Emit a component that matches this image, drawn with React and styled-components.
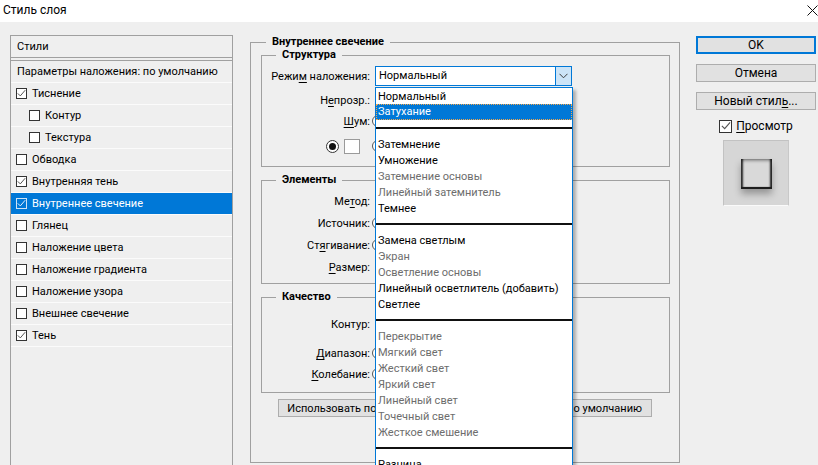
import React from 'react';
import styled, { createGlobalStyle } from 'styled-components';

const UI = `Roboto, "Noto Sans", "Liberation Sans", Arial, sans-serif`;
const BORDER = '#a0a0a0';
const BLUE = '#0078d7';

const GlobalStyle = createGlobalStyle`
  html, body { margin: 0; padding: 0; background: #efefef; overflow: hidden; }
  body { font-family: ${UI}; font-size: 11px; color: #000; }
  * { box-sizing: border-box; }
  u { text-decoration: underline; text-underline-offset: 2px; }
`;

const Window = styled.div`
  width: 818px;
  height: 465px;
  display: flex;
  flex-direction: column;
  overflow: hidden;
  background: #efefef;
`;

const TitleBar = styled.div`
  height: 22px;
  flex: none;
  background: #fff;
  display: flex;
  justify-content: space-between;
  align-items: flex-start;
  padding-left: 3px;
`;

const Title = styled.span`
  font-size: 12px;
  line-height: 20px;
`;

const CloseBtn = styled.div`
  width: 12px;
  height: 12px;
  margin-top: 4px;
  display: flex;
  align-items: center;
  justify-content: center;
`;

const Body = styled.div`
  flex: 1;
  min-height: 0;
  display: flex;
  padding: 13px 0 0 10px;
`;

/* ---------- left styles list ---------- */
const StylesPanel = styled.div`
  width: 223px;
  height: 470px;
  flex: none;
  border: 1px solid ${BORDER};
  display: flex;
  flex-direction: column;
`;

const PanelHeader = styled.div`
  height: 22px;
  border-bottom: 1px solid ${BORDER};
  margin-bottom: 2px;
  padding-left: 6px;
  display: flex;
  align-items: center;
`;

const BlendRow = styled.div`
  height: 23px;
  border-top: 1px solid ${BORDER};
  border-bottom: 1px solid #fbfbfb;
  padding-left: 6px;
  display: flex;
  align-items: center;
`;

const StyleRow = styled.div`
  height: 22px;
  border-bottom: 1px solid #fbfbfb;
  display: flex;
  align-items: center;
  gap: 5px;
  padding-left: ${p => (p.$indent ? 18 : 5)}px;
  background: ${p => (p.$selected ? BLUE : 'transparent')};
  color: ${p => (p.$selected ? '#fff' : '#000')};
`;

const Box = styled.span`
  width: 11px;
  height: 11px;
  flex: none;
  border: 1px solid ${p => (p.$light ? '#cfe3f5' : '#333')};
  background: ${p => (p.$light ? 'transparent' : '#fff')};
  display: flex;
  align-items: center;
  justify-content: center;
`;

const BigBox = styled(Box)`
  width: 13px;
  height: 13px;
`;

const Check = ({ color = '#555', size = 9 }) => (
  <svg width={size} height={size} viewBox="0 0 9 9">
    <path d="M0.8 4.4 L3.3 6.9 L8.2 1.2" fill="none" stroke={color} strokeWidth="1" />
  </svg>
);

/* ---------- center ---------- */
const Center = styled.div`
  width: 430px;
  flex: none;
  margin-left: 17px;
`;

const OuterSet = styled.fieldset`
  margin: 0;
  padding: 0 9px 45px 10px;
  border: 1px solid ${BORDER};
  min-width: 0;
`;

const OuterTitle = styled.legend`
  margin-left: 5px;
  padding: 0 6px;
  font-weight: bold;
  font-size: 11px;
  line-height: 14px;
`;

const Group = styled.fieldset`
  margin: ${p => p.$mt}px 0 0;
  padding: ${p => p.$pt}px 0 ${p => p.$pb}px;
  border: 1px solid ${BORDER};
  min-width: 0;
`;

const GroupTitle = styled.legend`
  margin-left: 14px;
  padding: 0 6px;
  font-weight: bold;
  font-size: 11px;
  line-height: 14px;
`;

const FormRow = styled.div`
  height: ${p => p.$h}px;
  display: flex;
  align-items: center;
`;

const FieldLabel = styled.div`
  width: 108px;
  flex: none;
  text-align: right;
  white-space: nowrap;
`;

const SwatchCell = styled.div`
  width: 108px;
  flex: none;
  display: flex;
  justify-content: flex-end;
  align-items: center;
  gap: 5px;
  padding-right: 10px;
`;

const Control = styled.div`
  margin-left: 5px;
  flex: 1;
  display: flex;
  align-items: center;
  position: relative;
`;

const Stub = styled.span`
  width: 12px;
  height: 12px;
  margin-left: -3px;
  border-radius: 50%;
  border: 1px solid #555;
  background: #fff;
`;

const Radio = styled.span`
  width: 13px;
  height: 13px;
  border-radius: 50%;
  border: 1px solid #333;
  background: #fff;
  display: flex;
  align-items: center;
  justify-content: center;
  &::after {
    content: '';
    width: 7px;
    height: 7px;
    border-radius: 50%;
    background: #111;
  }
`;

const Swatch = styled.span`
  width: 16px;
  height: 15px;
  background: #fff;
  border: 1px solid #9a9a9a;
`;

const Select = styled.div`
  width: 197px;
  height: 20px;
  border: 1px solid ${BLUE};
  background: #fff;
  display: flex;
  position: relative;
`;

const SelectValue = styled.div`
  flex: 1;
  padding-left: 3px;
  line-height: 18px;
`;

const SelectArrow = styled.div`
  width: 16px;
  background: #cce4f7;
  border-left: 1px solid ${BLUE};
  display: flex;
  align-items: center;
  justify-content: center;
`;

const DropList = styled.div`
  position: absolute;
  top: 20px;
  left: -1px;
  width: 198px;
  border: 1px solid ${BLUE};
  background: #fff;
  box-shadow: 3px 3px 3px rgba(0, 0, 0, 0.28);
  z-index: 5;
`;

const Option = styled.div`
  height: 16px;
  line-height: 15px;
  padding-left: 1px;
  white-space: nowrap;
  color: ${p => (p.$selected ? '#fff' : p.$gray ? '#6d6d6d' : '#000')};
  background: ${p => (p.$selected ? BLUE : '#fff')};
  border: 1px dotted ${p => (p.$selected ? '#f5a64a' : 'transparent')};
  border-bottom-width: 0;
  ${p => p.$selected && 'border-bottom-width: 1px; line-height: 14px;'}
`;

const Separator = styled.div`
  height: 16px;
  display: flex;
  align-items: center;
  &::after {
    content: '';
    flex: 1;
    height: 2px;
    background: #111;
  }
`;

const BottomButtons = styled.div`
  margin-top: 6px;
  padding-left: 17px;
  display: flex;
  gap: 34px;
`;

const FlatButton = styled.div`
  width: 170px;
  height: 18px;
  background: #e1e1e1;
  border: 1px solid #adadad;
  display: flex;
  align-items: center;
  justify-content: center;
  white-space: nowrap;
`;

/* ---------- right ---------- */
const Side = styled.div`
  width: 120px;
  flex: none;
  margin-left: 16px;
  padding-top: 1px;
  display: flex;
  flex-direction: column;
  align-items: center;
`;

const DialogButton = styled.div`
  width: 120px;
  height: 18px;
  margin-bottom: 10px;
  background: #e1e1e1;
  border: ${p => (p.$default ? `2px solid ${BLUE}` : '1px solid #adadad')};
  font-size: 12px;
  display: flex;
  align-items: center;
  justify-content: center;
`;

const PreviewToggle = styled.label`
  height: 16px;
  margin-top: -2px;
  display: flex;
  align-items: center;
  gap: 4px;
  font-size: 12px;
`;

const Preview = styled.div`
  width: 66px;
  height: 66px;
  margin-top: 6px;
  background: #d6d6d6;
  border: 1px solid;
  border-color: #c2c2c2 #c8c8c8 #fafafa #c2c2c2;
  display: flex;
  align-items: center;
  justify-content: center;
`;

const PreviewSquare = styled.div`
  width: 31px;
  height: 30px;
  margin-top: 1px;
  background: #d9d9d9;
  border-bottom: 2px solid #1e1e1e;
  box-shadow:
    inset 3px 0 2px -1px rgba(0, 0, 0, 0.8),
    inset -3px 0 2px -1px rgba(0, 0, 0, 0.85),
    inset 0 3px 3px -1px rgba(0, 0, 0, 0.35),
    0 5px 7px rgba(0, 0, 0, 0.3);
`;

const styles = [
  { t: 'Тиснение', c: true },
  { t: 'Контур', i: true },
  { t: 'Текстура', i: true },
  { t: 'Обводка' },
  { t: 'Внутренняя тень', c: true },
  { t: 'Внутреннее свечение', c: true, s: true },
  { t: 'Глянец' },
  { t: 'Наложение цвета' },
  { t: 'Наложение градиента' },
  { t: 'Наложение узора' },
  { t: 'Внешнее свечение' },
  { t: 'Тень', c: true },
];

const modes = [
  { t: 'Нормальный' },
  { t: 'Затухание', s: true },
  { sep: true },
  { t: 'Затемнение' },
  { t: 'Умножение' },
  { t: 'Затемнение основы', g: true },
  { t: 'Линейный затемнитель', g: true },
  { t: 'Темнее' },
  { sep: true },
  { t: 'Замена светлым' },
  { t: 'Экран', g: true },
  { t: 'Осветление основы', g: true },
  { t: 'Линейный осветлитель (добавить)' },
  { t: 'Светлее' },
  { sep: true },
  { t: 'Перекрытие', g: true },
  { t: 'Мягкий свет', g: true },
  { t: 'Жесткий свет', g: true },
  { t: 'Яркий свет', g: true },
  { t: 'Линейный свет', g: true },
  { t: 'Точечный свет', g: true },
  { t: 'Жесткое смешение', g: true },
  { sep: true },
  { t: 'Разница' },
];

export default function App() {
  return (
    <Window>
      <GlobalStyle />
      <TitleBar>
        <Title>Стиль слоя</Title>
        <CloseBtn>
          <svg width="11" height="11" viewBox="0 0 11 11">
            <path d="M0.5 0.5 L10.5 10.5 M10.5 0.5 L0.5 10.5" stroke="#111" strokeWidth="1" />
          </svg>
        </CloseBtn>
      </TitleBar>
      <Body>
        <StylesPanel>
          <PanelHeader>Стили</PanelHeader>
          <BlendRow>Параметры наложения: по умолчанию</BlendRow>
          {styles.map(s => (
            <StyleRow key={s.t} $indent={s.i} $selected={s.s}>
              <Box $light={s.s}>{s.c && <Check color={s.s ? '#dfefff' : '#555'} />}</Box>
              {s.t}
            </StyleRow>
          ))}
        </StylesPanel>

        <Center>
          <OuterSet>
            <OuterTitle>Внутреннее свечение</OuterTitle>

            <Group $mt={-1} $pt={0} $pb={6}>
              <GroupTitle>Структура</GroupTitle>
              <FormRow $h={28}>
                <FieldLabel>Режи<u>м</u> наложения:</FieldLabel>
                <Control>
                  <Select>
                    <SelectValue>Нормальный</SelectValue>
                    <SelectArrow>
                      <svg width="9" height="6" viewBox="0 0 9 6">
                        <path d="M0.5 0.8 L4.5 4.8 L8.5 0.8" fill="none" stroke="#3c3c3c" strokeWidth="1" />
                      </svg>
                    </SelectArrow>
                    <DropList>
                      {modes.map((m, idx) =>
                        m.sep ? (
                          <Separator key={idx} />
                        ) : (
                          <Option key={idx} $gray={m.g} $selected={m.s}>
                            {m.t}
                          </Option>
                        )
                      )}
                    </DropList>
                  </Select>
                </Control>
              </FormRow>
              <FormRow $h={20}>
                <FieldLabel>Н<u>е</u>прозр.:</FieldLabel>
                <Control />
              </FormRow>
              <FormRow $h={22}>
                <FieldLabel><u>Ш</u>ум:</FieldLabel>
                <Control><Stub /></Control>
              </FormRow>
              <FormRow $h={28}>
                <SwatchCell>
                  <Radio />
                  <Swatch />
                </SwatchCell>
                <Control><Stub /></Control>
              </FormRow>
            </Group>

            <Group $mt={6} $pt={3} $pb={5}>
              <GroupTitle>Элементы</GroupTitle>
              <FormRow $h={22}>
                <FieldLabel>Ме<u>т</u>од:</FieldLabel>
                <Control />
              </FormRow>
              <FormRow $h={22}>
                <FieldLabel>Источник:</FieldLabel>
                <Control><Stub /></Control>
              </FormRow>
              <FormRow $h={22}>
                <FieldLabel>Ст<u>я</u>гивание:</FieldLabel>
                <Control><Stub /></Control>
              </FormRow>
              <FormRow $h={22}>
                <FieldLabel><u>Р</u>азмер:</FieldLabel>
                <Control />
              </FormRow>
            </Group>

            <Group $mt={6} $pt={2} $pb={8}>
              <GroupTitle>Качество</GroupTitle>
              <FormRow $h={36}>
                <FieldLabel>Контур:</FieldLabel>
                <Control />
              </FormRow>
              <FormRow $h={22}>
                <FieldLabel><u>Д</u>иапазон:</FieldLabel>
                <Control><Stub /></Control>
              </FormRow>
              <FormRow $h={20}>
                <FieldLabel><u>К</u>олебание:</FieldLabel>
                <Control><Stub /></Control>
              </FormRow>
            </Group>

            <BottomButtons>
              <FlatButton>Использовать по умолчанию</FlatButton>
              <FlatButton>Восстановить по умолчанию</FlatButton>
            </BottomButtons>
          </OuterSet>
        </Center>

        <Side>
          <DialogButton $default>OK</DialogButton>
          <DialogButton>Отмена</DialogButton>
          <DialogButton>Новый стил<u>ь</u>...</DialogButton>
          <PreviewToggle>
            <BigBox><Check size={10} /></BigBox>
            <span><u>П</u>росмотр</span>
          </PreviewToggle>
          <Preview>
            <PreviewSquare />
          </Preview>
        </Side>
      </Body>
    </Window>
  );
}
